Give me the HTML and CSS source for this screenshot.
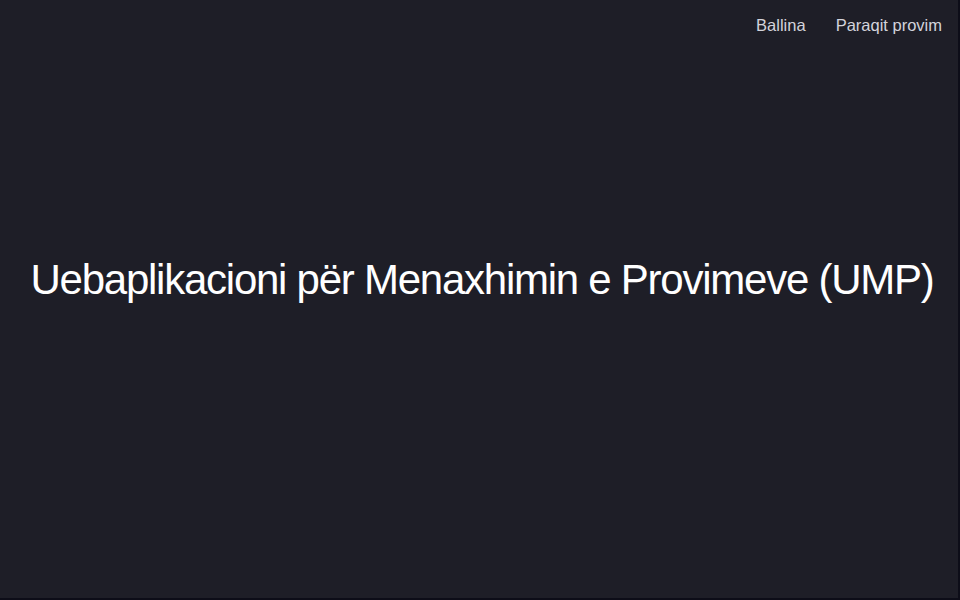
FILE: index.html
```html
<!DOCTYPE html>
<html lang="sq">
<head>
<meta charset="utf-8">
<title>UMP</title>
<link rel="stylesheet" href="styles.css">
</head>
<body>
<div class="page">
  <header class="topbar">
    <nav class="nav">
      <a class="nav-link" href="#">Ballina</a>
      <a class="nav-link" href="#">Paraqit provim</a>
    </nav>
  </header>
  <main class="hero">
    <h1 class="title">Uebaplikacioni për Menaxhimin e Provimeve (UMP)</h1>
  </main>
</div>
</body>
</html>
```
FILE: styles.css
```css
html, body {
  margin: 0;
  padding: 0;
  height: 100%;
}
body {
  background: #0d0d18;
  font-family: "Liberation Sans", Arial, sans-serif;
}
.page {
  width: 958px;
  height: 598px;
  background: #1e1e27;
  display: flex;
  flex-direction: column;
}
.topbar {
  display: flex;
  justify-content: flex-end;
  padding: 15px 16px 0 0;
}
.nav {
  display: flex;
  gap: 30px;
}
.nav-link {
  color: #d3d3db;
  text-decoration: none;
  font-size: 16.5px;
  line-height: 20px;
}
.hero {
  flex: 1;
  display: flex;
  align-items: center;
  justify-content: center;
  padding-bottom: 74px;
  padding-left: 6px;
}
.title {
  margin: 0;
  color: #ffffff;
  font-weight: normal;
  font-size: 42px;
  line-height: 48px;
  letter-spacing: -1.25px;
  white-space: nowrap;
}
```
